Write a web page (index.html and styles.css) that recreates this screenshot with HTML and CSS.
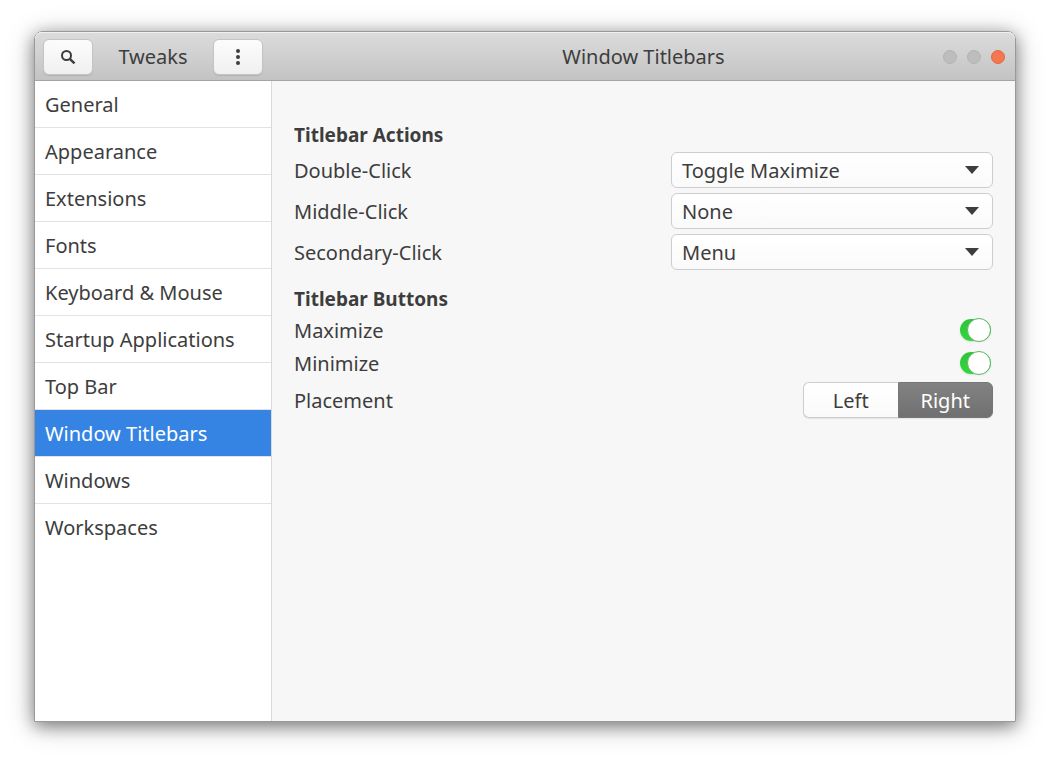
FILE: index.html
```
<!DOCTYPE html>
<html lang="en">
<head>
  <meta charset="UTF-8">
  <meta name="viewport" content="width=device-width, initial-scale=1.0">
  <title>Tweaks</title>
  <link rel="stylesheet" href="styles.css">
</head>
<body>
  <div class="window">
    <header class="titlebar">
      <div class="titlebar-side">
        <button class="header-button" type="button" aria-label="Search">
          <svg width="16" height="16" viewBox="0 0 16 16">
            <circle cx="6.5" cy="6.5" r="4.5" fill="none" stroke="#3d3d3d" stroke-width="2"/>
            <path d="M9.8 9.8L14.5 14.3" stroke="#3d3d3d" stroke-width="2.4"/>
          </svg>
        </button>
        <span class="app-name">Tweaks</span>
        <button class="header-button" type="button" aria-label="Menu">
          <svg width="16" height="16" viewBox="0 0 16 16" fill="#3d3d3d">
            <circle cx="8" cy="2" r="2"/>
            <circle cx="8" cy="8" r="2"/>
            <circle cx="8" cy="14" r="2"/>
          </svg>
        </button>
      </div>
      <div class="titlebar-main">
        <h1 class="page-title">Window Titlebars</h1>
        <div class="window-controls">
          <button class="control" type="button" aria-label="Minimize window"></button>
          <button class="control" type="button" aria-label="Maximize window"></button>
          <button class="control control-close" type="button" aria-label="Close window"></button>
        </div>
      </div>
    </header>

    <div class="window-body">
      <nav class="sidebar">
        <a class="sidebar-item" href="#general">General</a>
        <a class="sidebar-item" href="#appearance">Appearance</a>
        <a class="sidebar-item" href="#extensions">Extensions</a>
        <a class="sidebar-item" href="#fonts">Fonts</a>
        <a class="sidebar-item" href="#keyboard">Keyboard &amp; Mouse</a>
        <a class="sidebar-item" href="#startup">Startup Applications</a>
        <a class="sidebar-item" href="#topbar">Top Bar</a>
        <a class="sidebar-item active" href="#titlebars" aria-current="page">Window Titlebars</a>
        <a class="sidebar-item" href="#windows">Windows</a>
        <a class="sidebar-item" href="#workspaces">Workspaces</a>
      </nav>

      <main class="settings">
        <h2 class="section-title">Titlebar Actions</h2>
        <div class="row">
          <label class="row-label" for="double-click">Double-Click</label>
          <select id="double-click" class="dropdown">
            <option>Toggle Maximize</option>
            <option>None</option>
            <option>Menu</option>
          </select>
        </div>
        <div class="row">
          <label class="row-label" for="middle-click">Middle-Click</label>
          <select id="middle-click" class="dropdown">
            <option>None</option>
            <option>Toggle Maximize</option>
            <option>Menu</option>
          </select>
        </div>
        <div class="row">
          <label class="row-label" for="secondary-click">Secondary-Click</label>
          <select id="secondary-click" class="dropdown">
            <option>Menu</option>
            <option>None</option>
            <option>Toggle Maximize</option>
          </select>
        </div>

        <h2 class="section-title">Titlebar Buttons</h2>
        <div class="row row-switch">
          <label class="row-label" for="maximize">Maximize</label>
          <input type="checkbox" id="maximize" class="switch" checked>
        </div>
        <div class="row row-switch">
          <label class="row-label" for="minimize">Minimize</label>
          <input type="checkbox" id="minimize" class="switch" checked>
        </div>
        <div class="row">
          <span class="row-label" id="placement-label">Placement</span>
          <div class="button-group" role="group" aria-labelledby="placement-label">
            <button class="group-button" type="button" aria-pressed="false">Left</button>
            <button class="group-button selected" type="button" aria-pressed="true">Right</button>
          </div>
        </div>
      </main>
    </div>
  </div>
</body>
</html>
```
FILE: styles.css
```
* {
  box-sizing: border-box;
}

body {
  margin: 0;
  padding: 31px 34px 37px;
  min-height: 100vh;
  display: flex;
  background: #fff;
  color: #3d3d3d;
  font-family: "Noto Sans", sans-serif;
  font-size: 20px;
  line-height: 24px;
}

button,
select {
  font: inherit;
  color: inherit;
}

.window {
  flex: 1;
  display: flex;
  flex-direction: column;
  border: 1px solid #999;
  border-radius: 8px 8px 0 0;
  box-shadow: 0 4px 16px rgba(0, 0, 0, 0.4), 0 4px 28px rgba(0, 0, 0, 0.25);
}

.titlebar {
  display: flex;
  height: 49px;
  padding-top: 2px;
  background: linear-gradient(#dcdcdc, #c3c3c3);
  border-bottom: 1px solid #a5a5a5;
  border-radius: 7px 7px 0 0;
  box-shadow: inset 0 1px #f0f0f0;
}

.titlebar-side {
  width: 237px;
  padding: 0 9px 0 8px;
  display: flex;
  align-items: center;
  justify-content: space-between;
}

.header-button {
  width: 50px;
  height: 36px;
  padding: 0;
  display: flex;
  align-items: center;
  justify-content: center;
  border: 1px solid #c4c4c4;
  border-radius: 6px;
  background: linear-gradient(#fcfcfc, #f0f0f0);
  box-shadow: 0 1px 1px rgba(0, 0, 0, 0.1);
}

.titlebar-main {
  flex: 1;
  padding: 0 10px;
  display: grid;
  grid-template-columns: 1fr auto 1fr;
  align-items: center;
}

.page-title {
  grid-column: 2;
  margin: 0;
  font-size: 20px;
  font-weight: normal;
}

.window-controls {
  display: flex;
  gap: 10px;
  justify-content: flex-end;
}

.control {
  width: 14px;
  height: 14px;
  padding: 0;
  border: 1px solid #b4b4b4;
  border-radius: 50%;
  background: #bdbdbd;
}

.control-close {
  border-color: #e2683f;
  background: #f47750;
}

.window-body {
  flex: 1;
  display: flex;
}

.sidebar {
  width: 237px;
  background: #fff;
  border-right: 1px solid #dadada;
}

.sidebar-item {
  display: block;
  height: 47px;
  padding: 12px 10px 10px;
  border-bottom: 1px solid #e2e2e2;
  color: inherit;
  text-decoration: none;
}

.sidebar-item:last-child {
  border-bottom: none;
}

.sidebar-item.active {
  background: #3584e4;
  color: #fff;
}

.settings {
  flex: 1;
  padding: 30px 22px;
  display: flex;
  flex-direction: column;
  gap: 5px;
  background: #f7f7f7;
}

.section-title {
  margin: 12px 0 0;
  font-size: 19px;
  font-weight: bold;
}

.row {
  min-height: 36px;
  display: flex;
  align-items: center;
  justify-content: space-between;
}

.row-label {
  padding-top: 2px;
}

.row-switch {
  min-height: 28px;
  padding-right: 2px;
}

.dropdown {
  width: 322px;
  height: 36px;
  padding: 2px 10px 0;
  appearance: none;
  border: 1px solid #cdcdcd;
  border-radius: 6px;
  background: url("data:image/svg+xml,%3Csvg xmlns='http://www.w3.org/2000/svg' width='14' height='8'%3E%3Cpath d='M0 0h14L7 8z' fill='%233d3d3d'/%3E%3C/svg%3E") no-repeat right 13px center, linear-gradient(#fff, #fafafa);
}

.switch {
  width: 31px;
  height: 22px;
  margin: 0;
  display: flex;
  align-items: center;
  justify-content: flex-start;
  appearance: none;
  border-radius: 11px;
  background: linear-gradient(#2fc43a, #33d63e);
  box-shadow: 0 1px 2px rgba(0, 0, 0, 0.1);
}

.switch::before {
  content: "";
  width: 22px;
  height: 22px;
  border: 1px solid #5cb863;
  border-radius: 50%;
  background: #fff;
}

.switch:checked {
  justify-content: flex-end;
}

.button-group {
  width: 190px;
  display: flex;
  border-radius: 6px;
  box-shadow: 0 1px 1px rgba(0, 0, 0, 0.08);
}

.group-button {
  flex: 1;
  height: 36px;
  padding: 2px 0 0;
  border: 1px solid #cdcdcd;
  border-right: none;
  border-radius: 6px 0 0 6px;
  background: linear-gradient(#fff, #fafafa);
}

.group-button.selected {
  border: 1px solid #777;
  border-radius: 0 6px 6px 0;
  background: linear-gradient(#828282, #707070);
  color: #fff;
}
```
